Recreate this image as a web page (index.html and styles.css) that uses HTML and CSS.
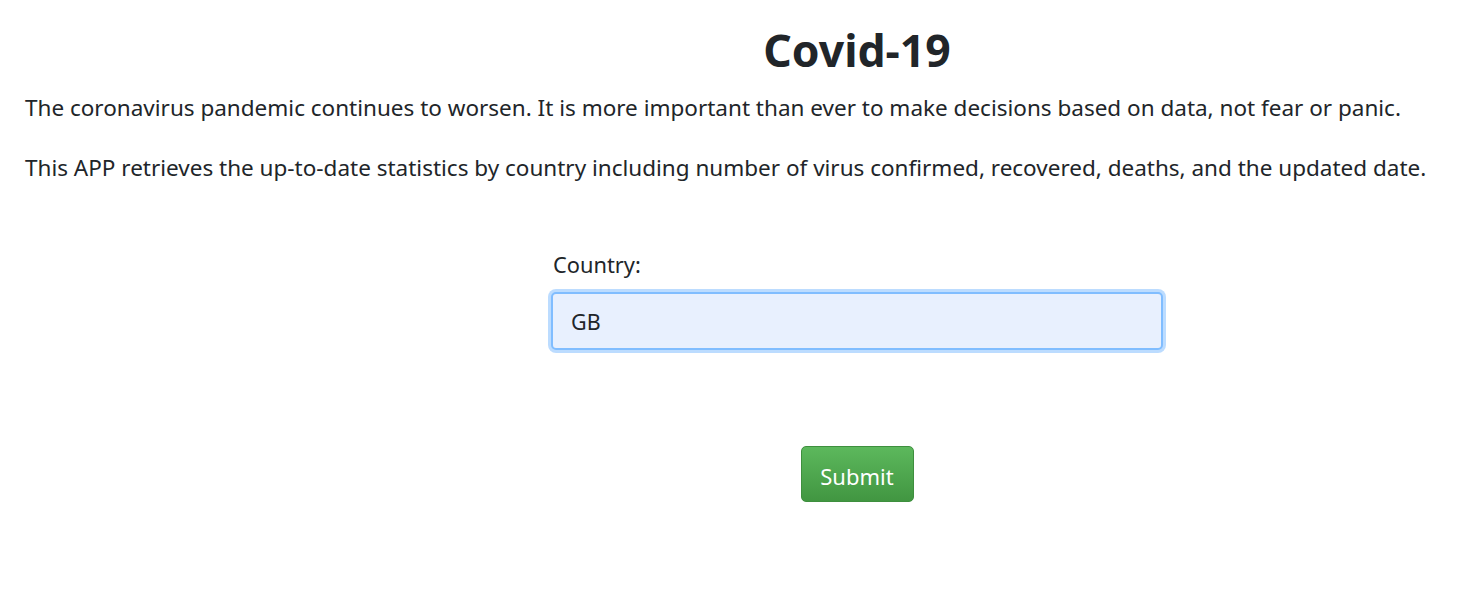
FILE: index.html
```html
<!DOCTYPE html>
<html lang="en">
<head>
<meta charset="utf-8">
<title>Covid-19</title>
<link rel="stylesheet" href="styles.css">
</head>
<body>
<header class="page-head">
  <h1 class="title">Covid-19</h1>
</header>
<section class="intro">
  <p class="lead-text">The coronavirus pandemic continues to worsen. It is more important than ever to make decisions based on data, not fear or panic.</p>
  <p class="lead-text">This APP retrieves the up-to-date statistics by country including number of virus confirmed, recovered, deaths, and the updated date.</p>
</section>
<form class="query-form" onsubmit="return false;">
  <div class="field">
    <label class="field-label" for="country">Country:</label>
    <input class="field-input" id="country" type="text" value="GB" autofocus>
  </div>
  <div class="actions">
    <button class="btn-submit" type="submit">Submit</button>
  </div>
</form>
</body>
</html>
```
FILE: styles.css
```css
html, body {
  margin: 0;
  padding: 0;
  background: #ffffff;
}
body {
  font-family: "Noto Sans", "Open Sans", sans-serif;
  font-size: 22.5px;
  line-height: 1.5;
  color: #212529;
  padding-top: 26px;
}
.page-head {
  padding-left: 242px;
  text-align: center;
}
.title {
  margin: 0 0 19px;
  font-size: 44.5px;
  font-weight: 700;
  line-height: 48px;
  color: #212529;
}
.intro {
  padding: 0 25px;
}
.lead-text {
  margin: 0 0 30px;
  line-height: 30px;
  white-space: nowrap;
}
.query-form {
  padding-left: 242px;
  padding-top: 37px;
  display: flex;
  flex-direction: column;
  align-items: center;
}
.field {
  width: 612px;
  display: flex;
  flex-direction: column;
}
.field-label {
  padding-left: 2px;
  font-size: 21.8px;
  line-height: 30px;
  margin-bottom: 12px;
}
.field-input {
  box-sizing: border-box;
  width: 612px;
  height: 58px;
  padding: 0 18px;
  font-family: inherit;
  font-size: 21.5px;
  color: #212529;
  background: #e8f0fe;
  border: 2px solid #80bdff;
  border-radius: 5px;
  box-shadow: 0 0 0 3px #bcdcff;
  outline: none;
  caret-color: #000;
}
.actions {
  padding-top: 96px;
}
.btn-submit {
  box-sizing: border-box;
  width: 113px;
  height: 56px;
  padding: 3px 0 0;
  font-family: inherit;
  font-size: 22px;
  color: #ffffff;
  background: linear-gradient(to bottom, #5cb85c 0%, #419641 100%);
  border: 1px solid #3e8f3e;
  border-radius: 5px;
  cursor: pointer;
}
```
